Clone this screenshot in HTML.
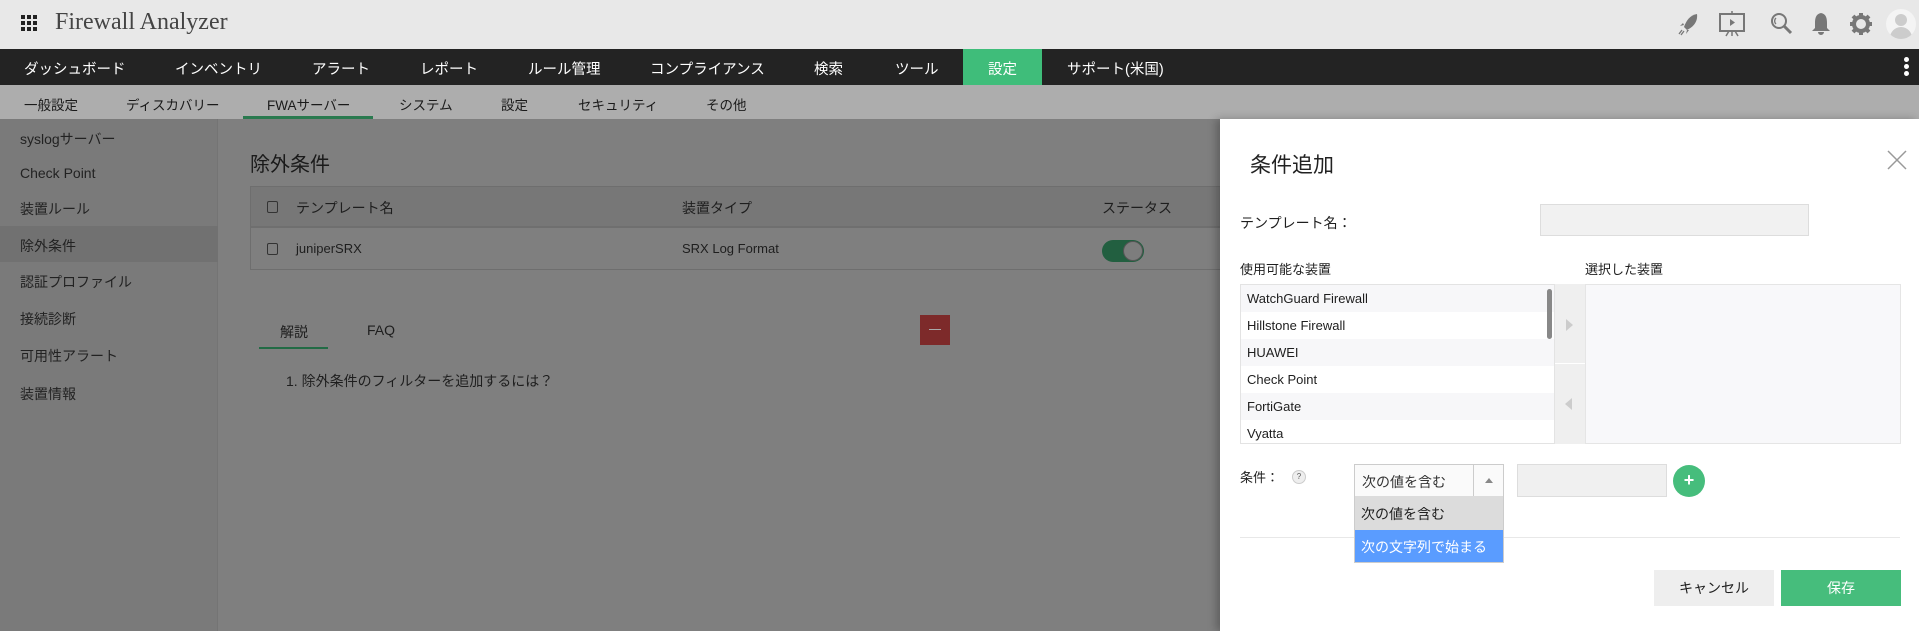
<!DOCTYPE html>
<html><head><meta charset="utf-8"><style>
*{margin:0;padding:0;box-sizing:border-box}
body{width:1919px;height:631px;overflow:hidden;position:relative;font-family:"Liberation Sans","Noto Sans CJK JP",sans-serif;background:#7f7f7f;color:#1e1e1e}
.a{position:absolute;white-space:nowrap}
#top{left:0;top:0;width:1919px;height:49px;background:#e8e8e8}
#nav{left:0;top:49px;width:1919px;height:36px;background:#232323}
#nav span{position:absolute;top:9px;color:#fff;font-size:14.5px}
#sub{left:0;top:85px;width:1919px;height:34px;background:#adadad}
#sub span{position:absolute;top:9px;color:#1a1a1a;font-size:13.5px}
#side{left:0;top:119px;width:218px;height:512px;background:#7a7a7a;border-right:1px solid #747474}
#side span{position:absolute;left:20px;font-size:14px;color:#222}
.cb{position:absolute;width:11px;height:12px;border:1px solid #333;border-radius:2px}
#modal{left:1220px;top:119px;width:699px;height:512px;background:#fff;box-shadow:-4px 0 8px rgba(0,0,0,.25)}
.m{position:absolute;white-space:nowrap}
</style></head><body>
<div class="a" id="top">
 <svg class="a" style="left:21px;top:15px" width="17" height="16"><g fill="#222"><rect x="0" y="0" width="4" height="4"/><rect x="6" y="0" width="4" height="4"/><rect x="12" y="0" width="4" height="4"/><rect x="0" y="6" width="4" height="4"/><rect x="6" y="6" width="4" height="4"/><rect x="12" y="6" width="4" height="4"/><rect x="0" y="12" width="4" height="4"/><rect x="6" y="12" width="4" height="4"/><rect x="12" y="12" width="4" height="4"/></g></svg>
 <div class="a" style="left:55px;top:9px;font-family:'Liberation Serif',serif;font-size:24px;color:#444">Firewall Analyzer</div>
 <svg class="a" style="left:1678px;top:12px" width="22" height="24" viewBox="0 0 22 24"><path d="M19 2 C12 3 8 9 6 15 L9 18 C15 15 20 10 19 2Z" fill="#777"/><path d="M6 13 L2 14 L5 11Z M9 18 L8 22 L11 18Z" fill="#777"/><path d="M4 18 L1 22 M6 19 L3 23" stroke="#777" stroke-width="1.3"/></svg>
 <svg class="a" style="left:1718px;top:11px" width="28" height="26"><rect x="2" y="3" width="24" height="17" fill="none" stroke="#777" stroke-width="2"/><path d="M12 8 L17 11.5 L12 15Z" fill="#777"/><path d="M14 0 V3 M14 20 V25 M8 25 L11 20 M20 25 L17 20" stroke="#777" stroke-width="1.5"/></svg>
 <svg class="a" style="left:1770px;top:12px" width="24" height="24"><circle cx="9" cy="9" r="7" fill="none" stroke="#777" stroke-width="2"/><path d="M14 14 L21 21" stroke="#777" stroke-width="3"/><path d="M6 6 A4 4 0 0 0 6 12" fill="none" stroke="#777" stroke-width="1.3"/></svg>
 <svg class="a" style="left:1811px;top:12px" width="20" height="24"><path d="M10 1 C5 2 4 6 4 11 L4 16 L1 19 L19 19 L16 16 L16 11 C16 6 15 2 10 1Z M7 20 A3 3 0 0 0 13 20Z" fill="#777"/></svg>
 <svg class="a" style="left:1850px;top:13px" width="22" height="22" viewBox="0 0 22 22"><circle cx="11" cy="11" r="7" fill="none" stroke="#777" stroke-width="4"/><g stroke="#777" stroke-width="4"><path d="M11 0V5M11 17V22M0 11H5M17 11H22M3 3L6.5 6.5M15.5 15.5L19 19M19 3L15.5 6.5M6.5 15.5L3 19"/></g></svg>
 <div class="a" style="left:1886px;top:9px;width:30px;height:30px;border-radius:50%;background:#f4f4f4;overflow:hidden"><div class="a" style="left:9px;top:5px;width:12px;height:12px;border-radius:50%;background:#ccc"></div><div class="a" style="left:4px;top:18px;width:22px;height:16px;border-radius:11px 11px 0 0;background:#ccc"></div></div>
</div>
<div class="a" id="nav">
 <span style="left:24px">ダッシュボード</span><span style="left:175px">インベントリ</span><span style="left:312px">アラート</span><span style="left:420px">レポート</span><span style="left:528px">ルール管理</span><span style="left:650px">コンプライアンス</span><span style="left:814px">検索</span><span style="left:895px">ツール</span>
 <div class="a" style="left:963px;top:0;width:79px;height:36px;background:#3fbd7a"></div><span style="left:988px">設定</span>
 <span style="left:1067px">サポート(米国)</span>
 <div class="a" style="left:1904px;top:8px;width:5px;height:5px;border-radius:50%;background:#fff"></div><div class="a" style="left:1904px;top:15px;width:5px;height:5px;border-radius:50%;background:#fff"></div><div class="a" style="left:1904px;top:22px;width:5px;height:5px;border-radius:50%;background:#fff"></div>
</div>
<div class="a" id="sub">
 <span style="left:24px">一般設定</span><span style="left:126px">ディスカバリー</span><span style="left:267px">FWAサーバー</span><span style="left:399px">システム</span><span style="left:501px">設定</span><span style="left:578px">セキュリティ</span><span style="left:706px">その他</span>
 <div class="a" style="left:243px;top:31px;width:130px;height:3px;background:#2a7a4f"></div>
</div>
<div class="a" id="side">
 <div class="a" style="left:0;top:107px;width:218px;height:36px;background:#717171"></div>
 <span style="top:10px">syslogサーバー</span><span style="top:46px">Check Point</span><span style="top:80px">装置ルール</span><span style="top:117px">除外条件</span><span style="top:153px">認証プロファイル</span><span style="top:190px">接続診断</span><span style="top:227px">可用性アラート</span><span style="top:265px">装置情報</span>
</div>
<div class="a" style="left:250px;top:148px;font-size:20px;color:#1a1a1a">除外条件</div>
<div class="a" style="left:250px;top:186px;width:1000px;height:84px;border:1px solid #6e6e6e"></div>
<div class="a" style="left:251px;top:187px;width:1000px;height:41px;background:#777;border-bottom:2px solid #6f6f6f"></div>
<div class="cb" style="left:267px;top:201px"></div>
<div class="a" style="left:296px;top:198px;font-size:14px">テンプレート名</div>
<div class="a" style="left:682px;top:198px;font-size:14px">装置タイプ</div>
<div class="a" style="left:1102px;top:198px;font-size:14px">ステータス</div>
<div class="cb" style="left:267px;top:243px"></div>
<div class="a" style="left:296px;top:241px;font-size:13px">juniperSRX</div>
<div class="a" style="left:682px;top:241px;font-size:13px">SRX Log Format</div>
<div class="a" style="left:1102px;top:240px;width:42px;height:22px;border-radius:11px;background:#225f40"></div>
<div class="a" style="left:1123px;top:241px;width:20px;height:20px;border-radius:50%;background:#7d7d7d;border:1px solid #555"></div>
<div class="a" style="left:280px;top:322px;font-size:14px">解説</div>
<div class="a" style="left:367px;top:322px;font-size:14px">FAQ</div>
<div class="a" style="left:259px;top:347px;width:69px;height:2px;background:#226b45"></div>
<div class="a" style="left:920px;top:315px;width:30px;height:30px;background:#7d2a2a"></div>
<div class="a" style="left:929px;top:329px;width:12px;height:1px;background:#aaa"></div>
<div class="a" style="left:286px;top:371px;font-size:14px">1. 除外条件のフィルターを追加するには？</div>

<div class="a" id="modal">
 <div class="m" style="left:30px;top:30px;font-size:21px;color:#222">条件追加</div>
 <svg class="m" style="left:667px;top:31px" width="20" height="20"><path d="M1 1L19 19M19 1L1 19" stroke="#999" stroke-width="1.5"/></svg>
 <div class="m" style="left:20px;top:94px;font-size:14px">テンプレート名：</div>
 <div class="m" style="left:320px;top:85px;width:269px;height:32px;background:#f1f1f1;border:1px solid #ddd"></div>
 <div class="m" style="left:20px;top:140px;font-size:13px">使用可能な装置</div>
 <div class="m" style="left:365px;top:140px;font-size:13px">選択した装置</div>
 <div class="m" style="left:20px;top:165px;width:315px;height:160px;border:1px solid #e3e3e3;background:#fff;overflow:hidden;font-size:13px">
  <div style="height:27px;background:#f7f7f9;padding:6px 6px">WatchGuard Firewall</div>
  <div style="height:27px;background:#fff;padding:6px 6px">Hillstone Firewall</div>
  <div style="height:27px;background:#f7f7f9;padding:6px 6px">HUAWEI</div>
  <div style="height:27px;background:#fff;padding:6px 6px">Check Point</div>
  <div style="height:27px;background:#f7f7f9;padding:6px 6px">FortiGate</div>
  <div style="height:27px;background:#fff;padding:6px 6px">Vyatta</div>
  <div class="m" style="left:306px;top:4px;width:5px;height:50px;border-radius:3px;background:#888"></div>
 </div>
 <div class="m" style="left:335px;top:165px;width:30px;height:79px;background:#efefef"></div>
 <div class="m" style="left:335px;top:245px;width:30px;height:80px;background:#efefef"></div>
 <div class="m" style="left:346px;top:200px;border-left:7px solid #ccc;border-top:6px solid transparent;border-bottom:6px solid transparent"></div>
 <div class="m" style="left:345px;top:279px;border-right:7px solid #ccc;border-top:6px solid transparent;border-bottom:6px solid transparent"></div>
 <div class="m" style="left:365px;top:165px;width:316px;height:160px;background:#f8f8fa;border:1px solid #e5e5e5"></div>
 <div class="m" style="left:20px;top:418px;width:660px;height:1px;background:#e8e8e8"></div>
 <div class="m" style="left:20px;top:348px;font-size:13px">条件：</div>
 <div class="m" style="left:72px;top:351px;width:14px;height:14px;border-radius:50%;background:#eee;border:1px solid #ccc;font-size:8px;text-align:center;line-height:12px;color:#555">?</div>
 <div class="m" style="left:134px;top:345px;width:150px;height:33px;border:1px solid #ccc;background:#fafafa"></div>
 <div class="m" style="left:253px;top:346px;width:1px;height:31px;background:#ccc"></div>
 <div class="m" style="left:265px;top:359px;border-bottom:5px solid #888;border-left:4px solid transparent;border-right:4px solid transparent"></div>
 <div class="m" style="left:142px;top:353px;font-size:14px;color:#333">次の値を含む</div>
 <div class="m" style="left:134px;top:377px;width:150px;height:34px;background:#dcdcdc;border-left:1px solid #ccc;border-right:1px solid #ccc;font-size:14px;padding:8px 6px">次の値を含む</div>
 <div class="m" style="left:134px;top:411px;width:150px;height:33px;background:#5a9cff;color:#fff;border:1px solid #ccc;border-top:none;font-size:14px;padding:7px 6px">次の文字列で始まる</div>
 <div class="m" style="left:297px;top:345px;width:150px;height:33px;background:#f0f0f0;border:1px solid #ddd"></div>
 <div class="m" style="left:453px;top:346px;width:32px;height:32px;border-radius:50%;background:#46bd7c;color:#fff;font-size:18px;text-align:center;line-height:30px;font-weight:bold">+</div>
 <div class="m" style="left:434px;top:451px;width:120px;height:36px;background:#eee;font-size:14px;text-align:center;line-height:36px">キャンセル</div>
 <div class="m" style="left:561px;top:451px;width:120px;height:36px;background:#46bd7c;color:#fff;font-size:14px;text-align:center;line-height:36px">保存</div>
</div>
</body></html>
